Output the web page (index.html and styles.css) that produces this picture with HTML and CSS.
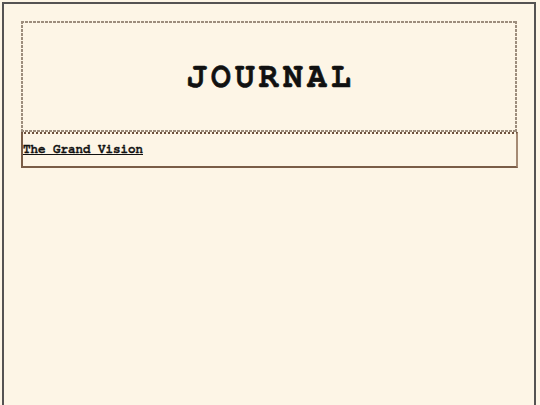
FILE: index.html
```html
<!DOCTYPE html>
<html>
<head>
<meta charset="utf-8">
<link rel="stylesheet" href="styles.css">
</head>
<body>
<div class="frame">
  <header class="masthead">
    <h1 class="title">JOURNAL</h1>
  </header>
  <div class="entry">
    <a class="entry-link" href="#">The Grand Vision</a>
  </div>
</div>
</body>
</html>
```
FILE: styles.css
```css
html, body {
  margin: 0;
  padding: 0;
  background: #fdf5e6;
}
body {
  font-family: FreeMono, "Liberation Mono", "Courier New", monospace;
  height: 405px;
  overflow: hidden;
}
.frame {
  box-sizing: border-box;
  width: 534px;
  height: 420px;
  margin: 2px 0 0 2px;
  border: 2px solid #555353;
  border-bottom: none;
  padding: 17px 17px 0 17px;
}
.masthead {
  box-sizing: border-box;
  height: 111px;
  padding: 2px;
  display: flex;
  align-items: center;
  justify-content: center;
  background:
    repeating-linear-gradient(90deg, #9d8d7d 0 3px, transparent 3px 4px) left top / 100% 2px no-repeat,
    repeating-linear-gradient(90deg, #9d8d7d 0 3px, transparent 3px 4px) left bottom / 100% 2px no-repeat,
    repeating-linear-gradient(180deg, #9d8d7d 0 3px, transparent 3px 4px) left top / 2px 100% no-repeat,
    repeating-linear-gradient(180deg, #9d8d7d 0 3px, transparent 3px 4px) right top / 2px 100% no-repeat;
}
.title {
  margin: 0 0 0 4px;
  font-size: 33px;
  font-weight: bold;
  letter-spacing: 4.2px;
  color: #111;
  line-height: 1;
  -webkit-text-stroke: 0.6px #111;
  transform: scaleY(1.1);
}
.entry {
  box-sizing: border-box;
  margin-right: -1px;
  border: 2px solid #7a5d47;
  border-top: 2px dotted #6e523e;
  border-right-color: #a58a74;
  padding: 8px 0;
}
.entry-link {
  display: block;
  font-size: 12.5px;
  line-height: 16px;
  font-weight: bold;
  color: #111;
  text-decoration: underline;
  -webkit-text-stroke: 0.3px #111;
}
```
